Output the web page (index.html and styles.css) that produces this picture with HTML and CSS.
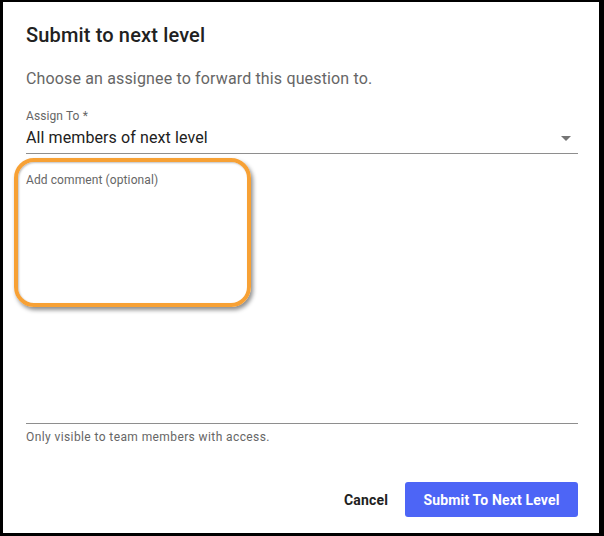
FILE: index.html
```html
<!DOCTYPE html>
<html>
<head>
<meta charset="utf-8">
<link rel="stylesheet" href="styles.css">
</head>
<body>
<div class="frame">
  <div class="dialog">
    <h1 class="title">Submit to next level</h1>
    <p class="subtitle">Choose an assignee to forward this question to.</p>
    <div class="select-field">
      <div class="field-label">Assign To *</div>
      <div class="select-row">
        <span class="select-value">All members of next level</span>
        <svg class="arrow" width="10" height="5" viewBox="0 0 10 5"><path d="M0 0L5 5L10 0Z" fill="#757575"/></svg>
      </div>
    </div>
    <div class="comment-field">
      <div class="field-label">Add comment (optional)</div>
      <div class="comment-area"></div>
    </div>
    <div class="helper">Only visible to team members with access.</div>
    <div class="actions">
      <button class="btn-cancel">Cancel</button>
      <button class="btn-submit">Submit To Next Level</button>
    </div>
  </div>
  <div class="highlight"></div>
</div>
</body>
</html>
```
FILE: styles.css
```css
* { box-sizing: border-box; }
html, body { margin: 0; padding: 0; background: #000; }
body { font-family: Roboto, "Liberation Sans", sans-serif; }
.frame {
  position: relative;
  width: 604px;
  height: 536px;
  background: #fff;
  border-style: solid;
  border-color: #000;
  border-width: 2px 5px 3px 3px;
}
.dialog {
  padding: 21px 21px 0 23px;
  display: flex;
  flex-direction: column;
}
.title {
  margin: 0;
  font-size: 20px;
  line-height: 24px;
  font-weight: 500;
  letter-spacing: 0.15px;
  color: #212121;
}
.subtitle {
  margin: 20px 0 0;
  font-size: 16px;
  line-height: 24px;
  letter-spacing: 0.15px;
  color: #666;
}
.select-field { margin-top: 17px; }
.field-label {
  font-size: 12px;
  line-height: 16px;
  letter-spacing: 0.1px;
  color: #666;
}
.select-row {
  margin-top: 2px;
  display: flex;
  align-items: center;
  justify-content: space-between;
  padding: 0 7px 3px 0;
  border-bottom: 1px solid #8e8e8e;
}
.select-value {
  font-size: 16px;
  line-height: 24px;
  letter-spacing: 0.1px;
  color: #212121;
}
.arrow { display: block; margin-top: 1px; }
.comment-field {
  margin-top: 18px;
  border-bottom: 1px solid #8e8e8e;
  height: 252px;
}
.comment-area { height: 200px; }
.helper {
  margin-top: 5px;
  font-size: 12px;
  line-height: 16px;
  letter-spacing: 0.4px;
  color: #666;
}
.actions {
  margin-top: 37px;
  display: flex;
  justify-content: flex-end;
  align-items: center;
}
.btn-cancel {
  border: 0;
  background: transparent;
  font-family: inherit;
  font-size: 14px;
  font-weight: 700;
  letter-spacing: 0.15px;
  color: #212121;
  padding: 0 17px 0 0;
  height: 35px;
}
.btn-submit {
  border: 0;
  border-radius: 3px;
  background: #4d65f6;
  color: #fff;
  font-family: inherit;
  font-size: 14px;
  font-weight: 700;
  letter-spacing: 0.15px;
  height: 35px;
  width: 173px;
  padding: 0;
}
.highlight {
  position: absolute;
  left: 11px;
  top: 156px;
  width: 237px;
  height: 149px;
  border: 4px solid #f7a135;
  border-radius: 20px;
  box-shadow: 2px 3px 4px rgba(0,0,0,0.45), inset 1px 1px 2px rgba(0,0,0,0.25);
}
```
